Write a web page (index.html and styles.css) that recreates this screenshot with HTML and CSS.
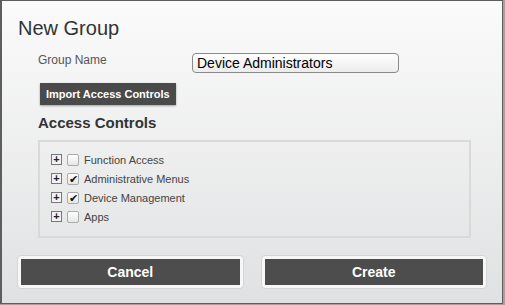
FILE: index.html
```html
<!DOCTYPE html>
<html lang="en">
<head>
    <meta charset="UTF-8">
    <title>New Group</title>
    <link rel="stylesheet" href="styles.css">
</head>
<body>
    <div class="dialog">
        <h1 class="dialog-title">New Group</h1>

        <div class="field-row">
            <label class="field-label" for="groupName">Group Name</label>
            <input class="text-input" id="groupName" type="text" value="Device Administrators">
        </div>

        <button class="import-btn">Import Access Controls</button>

        <h2 class="section-title">Access Controls</h2>

        <div class="controls-box">
            <div class="control-row">
                <span class="expander">+</span>
                <span class="check"></span>
                <span class="control-label">Function Access</span>
            </div>
            <div class="control-row">
                <span class="expander">+</span>
                <span class="check checked">&#10004;</span>
                <span class="control-label">Administrative Menus</span>
            </div>
            <div class="control-row">
                <span class="expander">+</span>
                <span class="check checked">&#10004;</span>
                <span class="control-label">Device Management</span>
            </div>
            <div class="control-row">
                <span class="expander">+</span>
                <span class="check"></span>
                <span class="control-label">Apps</span>
            </div>
        </div>

        <div class="actions">
            <button class="action-btn">Cancel</button>
            <button class="action-btn">Create</button>
        </div>
    </div>
</body>
</html>
```

FILE: styles.css
```css
body {
    margin: 0;
    background: #a3a3a3;
    font-family: Arial, 'Liberation Sans', sans-serif;
}

.dialog {
    box-sizing: border-box;
    width: 503px;
    height: 304px;
    border: 1px solid #5e5e5e;
    border-left-width: 2px;
    background: linear-gradient(#fbfbfb, #e0e1e2);
    padding: 0 16px 0 16px;
}

.dialog-title {
    margin: 0;
    padding-top: 16px;
    font-size: 20px;
    font-weight: normal;
    color: #333;
    line-height: 23px;
}

.field-row {
    display: flex;
    align-items: center;
    margin-top: 13px;
    padding-left: 20px;
}

.field-label {
    width: 154px;
    font-size: 12px;
    color: #555;
    margin-top: -6px;
}

.text-input {
    box-sizing: border-box;
    width: 207px;
    height: 20px;
    border: 1px solid #8a8a8a;
    border-radius: 4px;
    padding: 0 4px;
    font-family: inherit;
    font-size: 14px;
    color: #000;
    background: linear-gradient(#fff, #ececec);
}

.import-btn {
    display: block;
    margin: 10px 0 0 22px;
    height: 22px;
    padding: 0 6px;
    border: none;
    background: #4a4a4a;
    color: #fff;
    font-family: inherit;
    font-size: 11px;
    font-weight: bold;
    box-shadow: 0 1px 2px rgba(0,0,0,0.35);
}

.section-title {
    margin: 9px 0 0 20px;
    font-size: 15px;
    font-weight: bold;
    color: #333;
    line-height: 18px;
}

.controls-box {
    box-sizing: border-box;
    width: 433px;
    height: 98px;
    margin: 8px 0 0 20px;
    border: 2px solid #d9d9d9;
    padding: 8px 0 0 11px;
}

.control-row {
    display: flex;
    align-items: center;
    height: 19px;
}

.expander {
    box-sizing: border-box;
    width: 11px;
    height: 11px;
    border: 1px solid #777;
    background: #f2f2f2;
    font-size: 11px;
    font-weight: bold;
    line-height: 8px;
    text-align: center;
    color: #222;
}

.check {
    box-sizing: border-box;
    width: 12px;
    height: 12px;
    margin-left: 5px;
    border: 1px solid #aaa;
    border-radius: 2px;
    background: linear-gradient(#fff, #e6e6e6);
    font-size: 11px;
    line-height: 10px;
    text-align: center;
    color: #111;
}

.control-label {
    margin-left: 5px;
    font-size: 11px;
    color: #444;
}

.actions {
    display: flex;
    gap: 19px;
    margin-top: 18px;
}

.action-btn {
    flex: 1;
    height: 32px;
    border: 3px solid #f7f7f7;
    border-radius: 3px;
    outline: 1px solid #d5d5d5;
    background: #4d4d4d;
    color: #fff;
    font-family: inherit;
    font-size: 14px;
    font-weight: bold;
}
```
